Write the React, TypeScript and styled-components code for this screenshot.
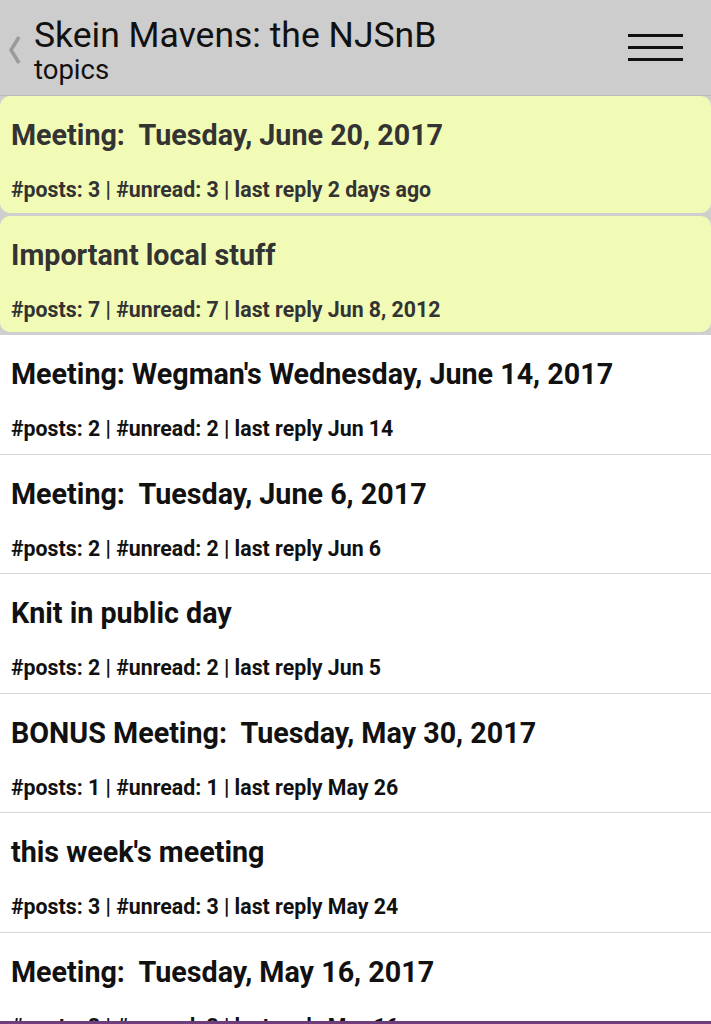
import React from "react";
import styled, { createGlobalStyle } from "styled-components";

const Global = createGlobalStyle`
  html, body { margin: 0; padding: 0; background: #ffffff; }
  body { font-family: Roboto, "Noto Sans", Arial, sans-serif; overflow: hidden; }
  * { box-sizing: border-box; }
`;

const Page = styled.div`
  width: 711px;
  height: 1024px;
  overflow: hidden;
  display: flex;
  flex-direction: column;
  background: #ffffff;
`;

const Header = styled.header`
  height: 96px;
  flex: none;
  background: #cdcdcd;
  border-bottom: 1px solid #b9b9b9;
  display: flex;
  align-items: flex-start;
  padding: 16px 28px 0 6px;
`;

const Back = styled.svg`
  width: 28px;
  height: 28px;
  margin-top: 20px;
  flex: none;
`;

const Titles = styled.div`
  flex: 1;
  display: flex;
  flex-direction: column;
`;

const Title = styled.div`
  font-size: 35.5px;
  line-height: 39px;
  color: #111;
  font-weight: 400;
`;

const Subtitle = styled.div`
  font-size: 27.5px;
  line-height: 30px;
  color: #111;
`;

const Burger = styled.div`
  margin-top: 18px;
  width: 55px;
  display: flex;
  flex-direction: column;
  gap: 9px;
  span {
    display: block;
    height: 3px;
    background: #111;
  }
`;

const List = styled.div`
  background: #cfcfcf;
  flex: 1;
  display: flex;
  flex-direction: column;
`;

const Item = styled.div<{ $hot?: boolean }>`
  height: ${(p) => (p.$hot ? "116.5px" : "119.5px")};
  flex: none;
  padding: 22px 11px 0;
  background: ${(p) => (p.$hot ? "#f2fbb6" : "#ffffff")};
  border-radius: ${(p) => (p.$hot ? "10px" : "0")};
  margin-bottom: ${(p) => (p.$hot ? "3px" : "0")};
  border-bottom: ${(p) => (p.$hot ? "none" : "1px solid #d6d6d6")};
  color: ${(p) => (p.$hot ? "#333333" : "#111111")};
`;

const ItemTitle = styled.div`
  font-size: 28.7px;
  line-height: 34px;
  font-weight: 700;
  white-space: pre;
`;

const Meta = styled.div`
  margin-top: 25px;
  font-size: 21.3px;
  line-height: 26px;
  font-weight: 700;
  white-space: pre;
`;

const NavEdge = styled.div`
  position: fixed;
  left: 0;
  right: 0;
  bottom: 0;
  height: 3px;
  background: #6e3f7c;
`;

const topics = [
  { t: "Meeting:  Tuesday, June 20, 2017", m: "#posts: 3 | #unread: 3 | last reply 2 days ago", hot: true },
  { t: "Important local stuff", m: "#posts: 7 | #unread: 7 | last reply Jun 8, 2012", hot: true },
  { t: "Meeting: Wegman's Wednesday, June 14, 2017", m: "#posts: 2 | #unread: 2 | last reply Jun 14" },
  { t: "Meeting:  Tuesday, June 6, 2017", m: "#posts: 2 | #unread: 2 | last reply Jun 6" },
  { t: "Knit in public day", m: "#posts: 2 | #unread: 2 | last reply Jun 5" },
  { t: "BONUS Meeting:  Tuesday, May 30, 2017", m: "#posts: 1 | #unread: 1 | last reply May 26" },
  { t: "this week's meeting", m: "#posts: 3 | #unread: 3 | last reply May 24" },
  { t: "Meeting:  Tuesday, May 16, 2017", m: "#posts: 3 | #unread: 3 | last reply May 16" },
];

export default function App() {
  return (
    <Page>
      <Global />
      <Header>
        <Back viewBox="0 0 28 28">
          <polyline points="13,1 5,14 13,27" fill="none" stroke="#9a9a9a" strokeWidth="3.5" strokeLinejoin="miter" />
        </Back>
        <Titles>
          <Title>Skein Mavens: the NJSnB</Title>
          <Subtitle>topics</Subtitle>
        </Titles>
        <Burger>
          <span />
          <span />
          <span />
        </Burger>
      </Header>
      <List>
        {topics.map((x, i) => (
          <Item key={i} $hot={x.hot}>
            <ItemTitle>{x.t}</ItemTitle>
            <Meta>{x.m}</Meta>
          </Item>
        ))}
      </List>
      <NavEdge />
    </Page>
  );
}
